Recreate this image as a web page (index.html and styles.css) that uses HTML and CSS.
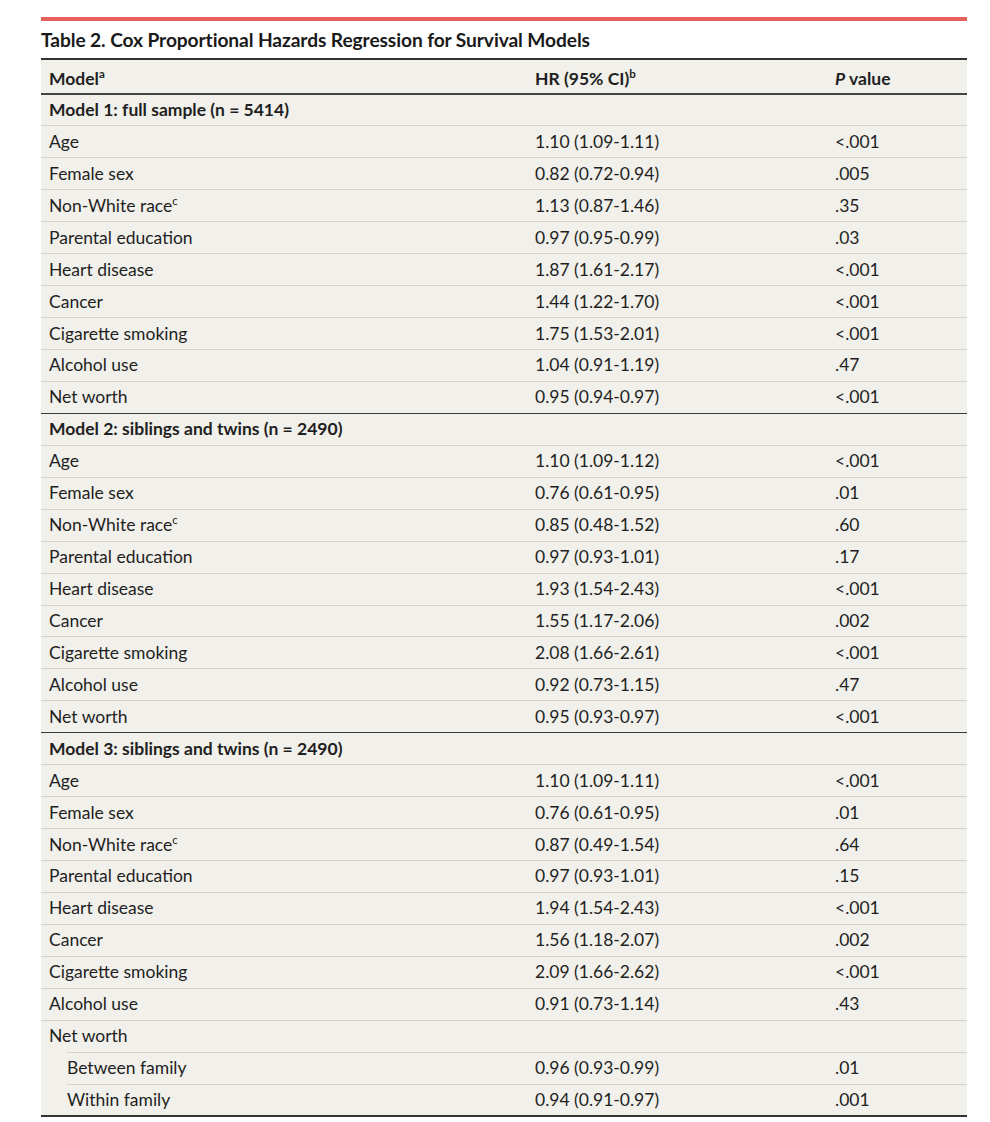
FILE: index.html
```html
<!DOCTYPE html>
<html>
<head>
<meta charset="utf-8">
<link rel="stylesheet" href="styles.css">
</head>
<body>
<div class="wrap">
  <div class="rule"></div>
  <h1 class="title">Table 2. Cox Proportional Hazards Regression for Survival Models</h1>
  <table class="tbl">
    <colgroup><col class="c1"><col class="c2"><col class="c3"></colgroup>
    <thead>
      <tr><th>Model<sup>a</sup></th><th>HR (95% CI)<sup>b</sup></th><th><i>P</i> value</th></tr>
    </thead>
    <tbody>
      <tr class="grp first"><td colspan="3">Model 1: full sample (n = 5414)</td></tr>
      <tr><td>Age</td><td>1.10 (1.09-1.11)</td><td>&lt;.001</td></tr>
      <tr><td>Female sex</td><td>0.82 (0.72-0.94)</td><td>.005</td></tr>
      <tr><td>Non-White race<sup>c</sup></td><td>1.13 (0.87-1.46)</td><td>.35</td></tr>
      <tr><td>Parental education</td><td>0.97 (0.95-0.99)</td><td>.03</td></tr>
      <tr><td>Heart disease</td><td>1.87 (1.61-2.17)</td><td>&lt;.001</td></tr>
      <tr><td>Cancer</td><td>1.44 (1.22-1.70)</td><td>&lt;.001</td></tr>
      <tr><td>Cigarette smoking</td><td>1.75 (1.53-2.01)</td><td>&lt;.001</td></tr>
      <tr><td>Alcohol use</td><td>1.04 (0.91-1.19)</td><td>.47</td></tr>
      <tr><td>Net worth</td><td>0.95 (0.94-0.97)</td><td>&lt;.001</td></tr>
      <tr class="grp"><td colspan="3">Model 2: siblings and twins (n = 2490)</td></tr>
      <tr><td>Age</td><td>1.10 (1.09-1.12)</td><td>&lt;.001</td></tr>
      <tr><td>Female sex</td><td>0.76 (0.61-0.95)</td><td>.01</td></tr>
      <tr><td>Non-White race<sup>c</sup></td><td>0.85 (0.48-1.52)</td><td>.60</td></tr>
      <tr><td>Parental education</td><td>0.97 (0.93-1.01)</td><td>.17</td></tr>
      <tr><td>Heart disease</td><td>1.93 (1.54-2.43)</td><td>&lt;.001</td></tr>
      <tr><td>Cancer</td><td>1.55 (1.17-2.06)</td><td>.002</td></tr>
      <tr><td>Cigarette smoking</td><td>2.08 (1.66-2.61)</td><td>&lt;.001</td></tr>
      <tr><td>Alcohol use</td><td>0.92 (0.73-1.15)</td><td>.47</td></tr>
      <tr><td>Net worth</td><td>0.95 (0.93-0.97)</td><td>&lt;.001</td></tr>
      <tr class="grp"><td colspan="3">Model 3: siblings and twins (n = 2490)</td></tr>
      <tr><td>Age</td><td>1.10 (1.09-1.11)</td><td>&lt;.001</td></tr>
      <tr><td>Female sex</td><td>0.76 (0.61-0.95)</td><td>.01</td></tr>
      <tr><td>Non-White race<sup>c</sup></td><td>0.87 (0.49-1.54)</td><td>.64</td></tr>
      <tr><td>Parental education</td><td>0.97 (0.93-1.01)</td><td>.15</td></tr>
      <tr><td>Heart disease</td><td>1.94 (1.54-2.43)</td><td>&lt;.001</td></tr>
      <tr><td>Cancer</td><td>1.56 (1.18-2.07)</td><td>.002</td></tr>
      <tr><td>Cigarette smoking</td><td>2.09 (1.66-2.62)</td><td>&lt;.001</td></tr>
      <tr><td>Alcohol use</td><td>0.91 (0.73-1.14)</td><td>.43</td></tr>
      <tr><td>Net worth</td><td></td><td></td></tr>
      <tr class="sub"><td>Between family</td><td>0.96 (0.93-0.99)</td><td>.01</td></tr>
      <tr class="sub"><td>Within family</td><td>0.94 (0.91-0.97)</td><td>.001</td></tr>
    </tbody>
  </table>
</div>
</body>
</html>
```

FILE: styles.css
```css
html, body {
  margin: 0;
  padding: 0;
  background: #ffffff;
}
body {
  font-family: Lato, "Liberation Sans", sans-serif;
  color: #1f1f1f;
}
.wrap {
  width: 926px;
  margin-left: 41px;
  padding-top: 17px;
}
.rule {
  height: 4px;
  background: #e4615b;
}
.title {
  margin: 0;
  padding-top: 5px;
  height: 32px;
  font-size: 19.2px;
  line-height: 28px;
  font-weight: 700;
  color: #1a1a1a;
  letter-spacing: -0.1px;
}
.tbl {
  width: 926px;
  border-collapse: collapse;
  table-layout: fixed;
  background: #f1f0ea;
  border-top: 2px solid #333333;
  border-bottom: 2px solid #333333;
  font-size: 17.5px;
}
.c1 { width: 486px; }
.c2 { width: 300px; }
.c3 { width: 140px; }
.tbl th {
  text-align: left;
  font-weight: 700;
  height: 35px;
  padding: 4px 8px 0 8px;
  box-sizing: border-box;
  line-height: 20px;
  border-bottom: 2px solid #444444;
}
.tbl td {
  height: 31.94px;
  padding: 0 8px;
  box-sizing: border-box;
  line-height: 20px;
  border-top: 1px solid #d5d3cb;
  vertical-align: middle;
}
.tbl sup {
  font-size: 11.5px;
  line-height: 0;
  vertical-align: 7px;
}
.grp td {
  font-weight: 700;
  border-top: 1px solid #3a3a3a;
}
.grp.first td {
  border-top: none;
}
.sub td:first-child {
  padding-left: 26px;
  border-top: none;
  background: linear-gradient(#d5d3cb, #d5d3cb) no-repeat 26px 0 / calc(100% - 26px) 1px;
}
```
